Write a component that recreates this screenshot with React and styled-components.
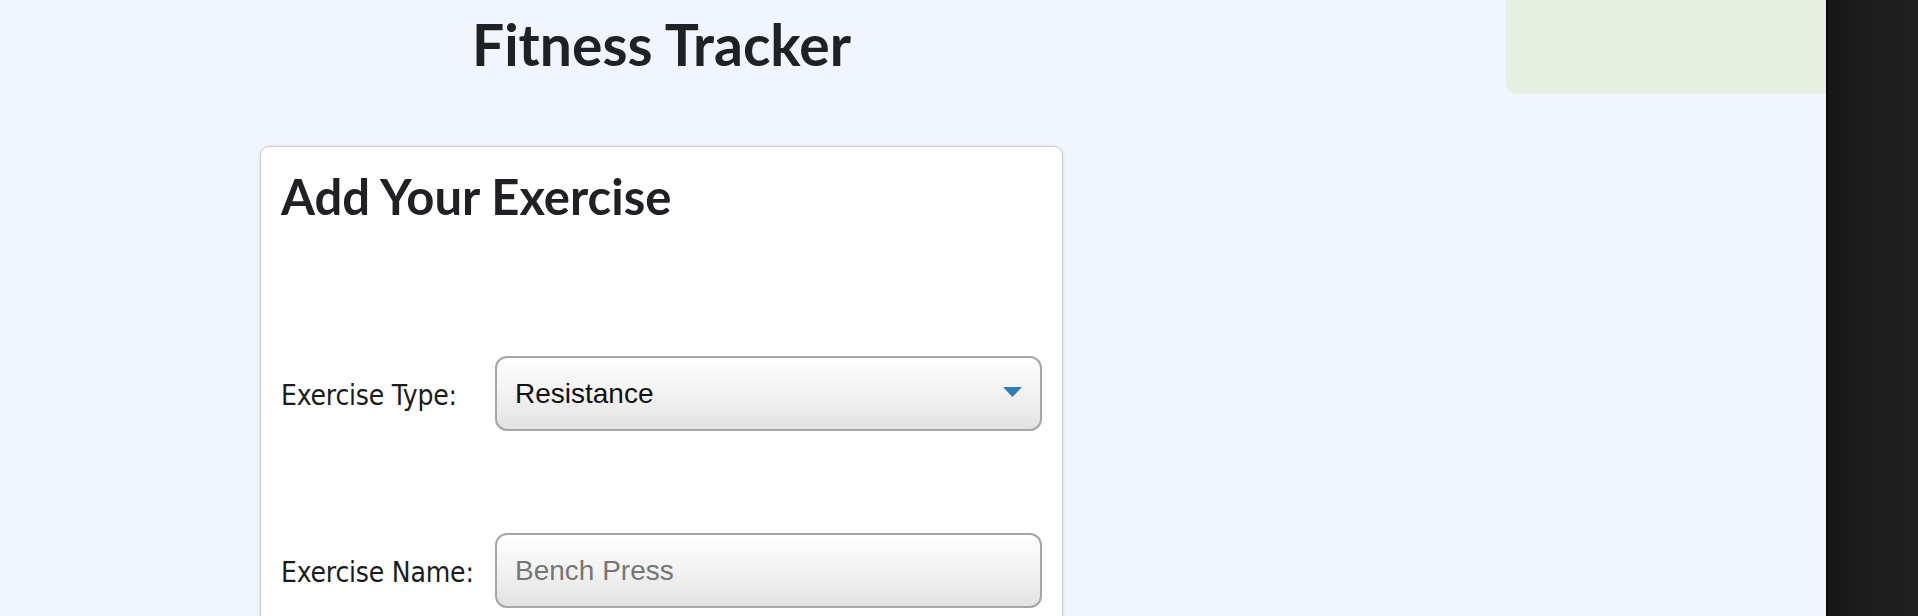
import React from "react";
import styled, { createGlobalStyle } from "styled-components";

const GlobalStyle = createGlobalStyle`
  html, body {
    margin: 0;
    padding: 0;
    background: #f1f6fe;
    overflow: hidden;
  }
  * { box-sizing: border-box; }
`;

const Page = styled.div`
  display: grid;
  grid-template-columns: 1fr 92px;
  height: 616px;
  overflow: hidden;
  background: #f1f6fe;
`;

const Content = styled.div`
  display: flex;
  align-items: flex-start;
  justify-content: space-between;
  padding-left: 260px;
  min-width: 0;
`;

const MainColumn = styled.main`
  width: 803px;
  display: flex;
  flex-direction: column;
`;

const Title = styled.h1`
  margin: 10px 0 0;
  text-align: center;
  font-family: Lato, "Noto Sans", sans-serif;
  font-weight: 700;
  font-size: 57px;
  line-height: 1.2;
  color: #202124;
`;

const Card = styled.section`
  margin-top: 68px;
  background: #ffffff;
  border: 1.5px solid #c9c9c9;
  border-radius: 9px;
  box-shadow: 0 1px 4px rgba(0, 0, 0, 0.1);
  padding: 20px 20px 40px;
`;

const CardHeading = styled.h2`
  margin: 0 0 130px;
  font-family: Lato, "Noto Sans", sans-serif;
  font-weight: 700;
  font-size: 49px;
  line-height: 1.2;
  color: #202124;
`;

const FormRow = styled.div`
  display: grid;
  grid-template-columns: 214px 1fr;
  align-items: center;
  margin-bottom: ${(p) => p.$gap || 0}px;
`;

const Label = styled.label`
  font-family: "DejaVu Sans Condensed", "DejaVu Sans", sans-serif;
  font-stretch: condensed;
  font-size: 28px;
  letter-spacing: -0.2px;
  color: #1c1c1c;
  padding-top: 4px;
`;

const fieldBase = `
  width: 100%;
  height: 75px;
  border: 2px solid #a6a6a6;
  border-radius: 12px;
  background: linear-gradient(to bottom, #fefefe 0%, #f2f2f2 50%, #e2e2e2 100%);
  font-family: "Liberation Sans", Arial, sans-serif;
  font-size: 28px;
  color: #111;
  padding: 0 18px;
  outline: none;
`;

const SelectWrap = styled.div`
  position: relative;
`;

const Select = styled.select`
  ${fieldBase}
  appearance: none;
  -webkit-appearance: none;
  cursor: pointer;
`;

const Caret = styled.svg`
  position: absolute;
  right: 20px;
  top: 31px;
  width: 19px;
  height: 10px;
  pointer-events: none;
`;

const Input = styled.input`
  ${fieldBase}
  &::placeholder {
    color: #767676;
  }
`;

const Aside = styled.aside`
  width: 320px;
  height: 94px;
  background: #e5f0e3;
  border-radius: 0 0 0 10px;
  flex-shrink: 0;
`;

const SidePanel = styled.div`
  border-left: 2px solid #0a0a0a;
  background: linear-gradient(to right, #161616 0%, #1d1d1d 40%, #202020 100%);
`;

export default function App() {
  return (
    <>
      <GlobalStyle />
      <Page>
        <Content>
          <MainColumn>
            <Title>Fitness Tracker</Title>
            <Card>
              <CardHeading>Add Your Exercise</CardHeading>
              <FormRow $gap={102}>
                <Label htmlFor="type">Exercise Type:</Label>
                <SelectWrap>
                  <Select id="type" defaultValue="Resistance">
                    <option>Resistance</option>
                    <option>Cardio</option>
                  </Select>
                  <Caret viewBox="0 0 19 10">
                    <polygon points="0,0 19,0 9.5,10" fill="#2f7bb8" />
                  </Caret>
                </SelectWrap>
              </FormRow>
              <FormRow>
                <Label htmlFor="name">Exercise Name:</Label>
                <Input id="name" placeholder="Bench Press" />
              </FormRow>
            </Card>
          </MainColumn>
          <Aside />
        </Content>
        <SidePanel />
      </Page>
    </>
  );
}
